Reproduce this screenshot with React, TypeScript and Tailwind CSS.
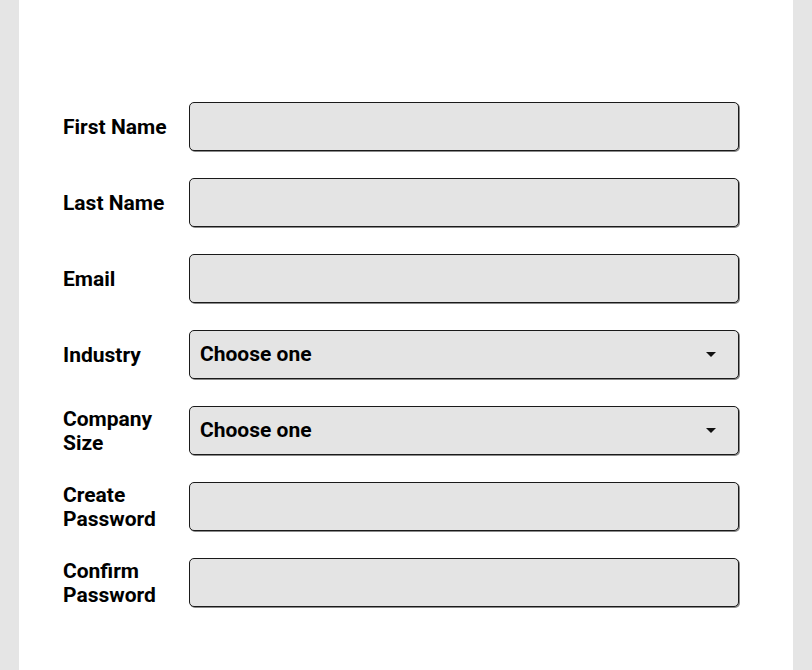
import React from "react";

const fields: { label: string; type: "input" | "select" }[] = [
  { label: "First Name", type: "input" },
  { label: "Last Name", type: "input" },
  { label: "Email", type: "input" },
  { label: "Industry", type: "select" },
  { label: "Company Size", type: "select" },
  { label: "Create Password", type: "input" },
  { label: "Confirm Password", type: "input" },
];

export default function App() {
  return (
    <div
      className="w-[812px] h-[670px] bg-[#e5e5e5] overflow-hidden"
      style={{ fontFamily: "Roboto, 'Liberation Sans', sans-serif" }}
    >
      <div className="ml-[19px] w-[774px] h-[670px] bg-white pl-[44px] pr-[54px] pt-[102px]">
        <div className="flex flex-col gap-[27px]">
          {fields.map((f) => (
            <div key={f.label} className="flex items-center h-[49px]">
              <div className="w-[126px] shrink-0 pr-[16px] pt-[1px] text-[21px] leading-[24px] font-bold text-black">
                {f.label}
              </div>
              <div className="flex-1 h-[49px] rounded-[5px] border border-[#1a1a1a] bg-[#e4e4e4] shadow-[1px_1px_0_#8a8a8a] flex items-center px-[10px]">
                {f.type === "select" && (
                  <>
                    <span className="flex-1 text-[21px] font-bold text-black">Choose one</span>
                    <svg width="10" height="6" viewBox="0 0 10 6" className="mr-[12px]">
                      <path d="M0 0 L10 0 L5 5 Z" fill="#111" />
                    </svg>
                  </>
                )}
              </div>
            </div>
          ))}
        </div>
      </div>
    </div>
  );
}
